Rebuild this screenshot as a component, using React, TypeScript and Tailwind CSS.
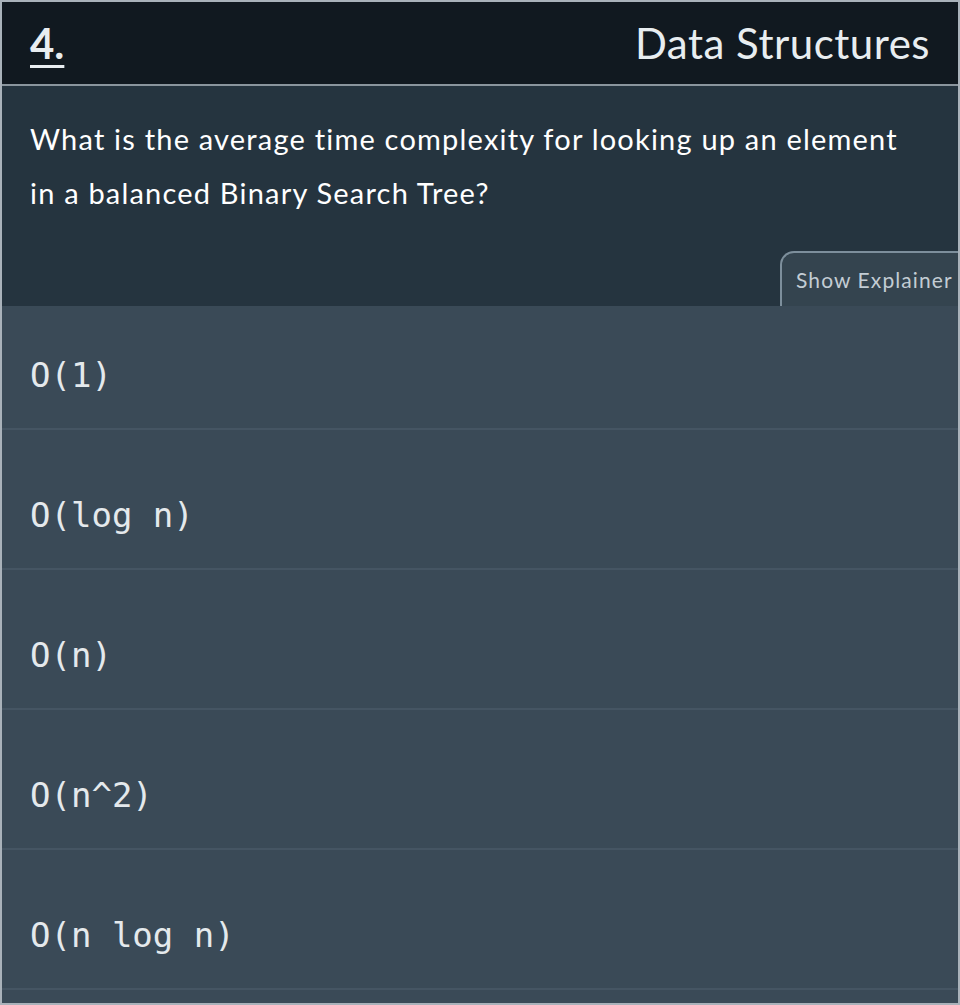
import React from 'react';

const options = ['O(1)', 'O(log n)', 'O(n)', 'O(n^2)', 'O(n log n)'];

const App = () => {
  return (
    <div className="w-[960px] h-[1005px] flex flex-col border-2 border-[#a9b2ba] bg-[#3a4a57] overflow-hidden font-['Lato',sans-serif]">
      {/* header */}
      <div className="h-[84px] shrink-0 flex items-center justify-between pl-[28px] pr-[28px] bg-[#111920] border-b-2 border-[#8a959d] text-[#e8edf0]">
        <span className="text-[42px] leading-none font-bold underline decoration-[3px] underline-offset-[6px]">4.</span>
        <span className="text-[42px] leading-none tracking-[0.5px]">Data Structures</span>
      </div>

      {/* question */}
      <div className="h-[220px] shrink-0 flex flex-col bg-[#25343f]">
        <p className="pl-[28px] pr-[30px] pt-[26px] text-[29px] leading-[54px] text-white tracking-[1.2px]">
          What is the average time complexity for looking up an element in a balanced Binary Search Tree?
        </p>
        <button className="mt-auto self-end w-[180px] h-[55px] -mr-[2px] pl-[14px] text-left rounded-tl-[14px] border-t-2 border-l-2 border-[#7d8f9c] bg-[#34444f] text-[21px] tracking-[1.1px] text-[#c3cdd4]">
          Show Explainer
        </button>
      </div>

      {/* answers */}
      <div className="flex flex-col">
        {options.map((opt, i) => (
          <div
            key={opt}
            className={`flex items-center pl-[28px] border-b-2 border-[#455563] ${
              i === 0 ? 'h-[124px] pt-[16px]' : 'h-[140px] pt-[32px]'
            }`}
          >
            <span className="font-['DejaVu_Sans_Mono',monospace] text-[34px] text-[#e4e9ec]">{opt}</span>
          </div>
        ))}
      </div>
    </div>
  );
};

export default App;
